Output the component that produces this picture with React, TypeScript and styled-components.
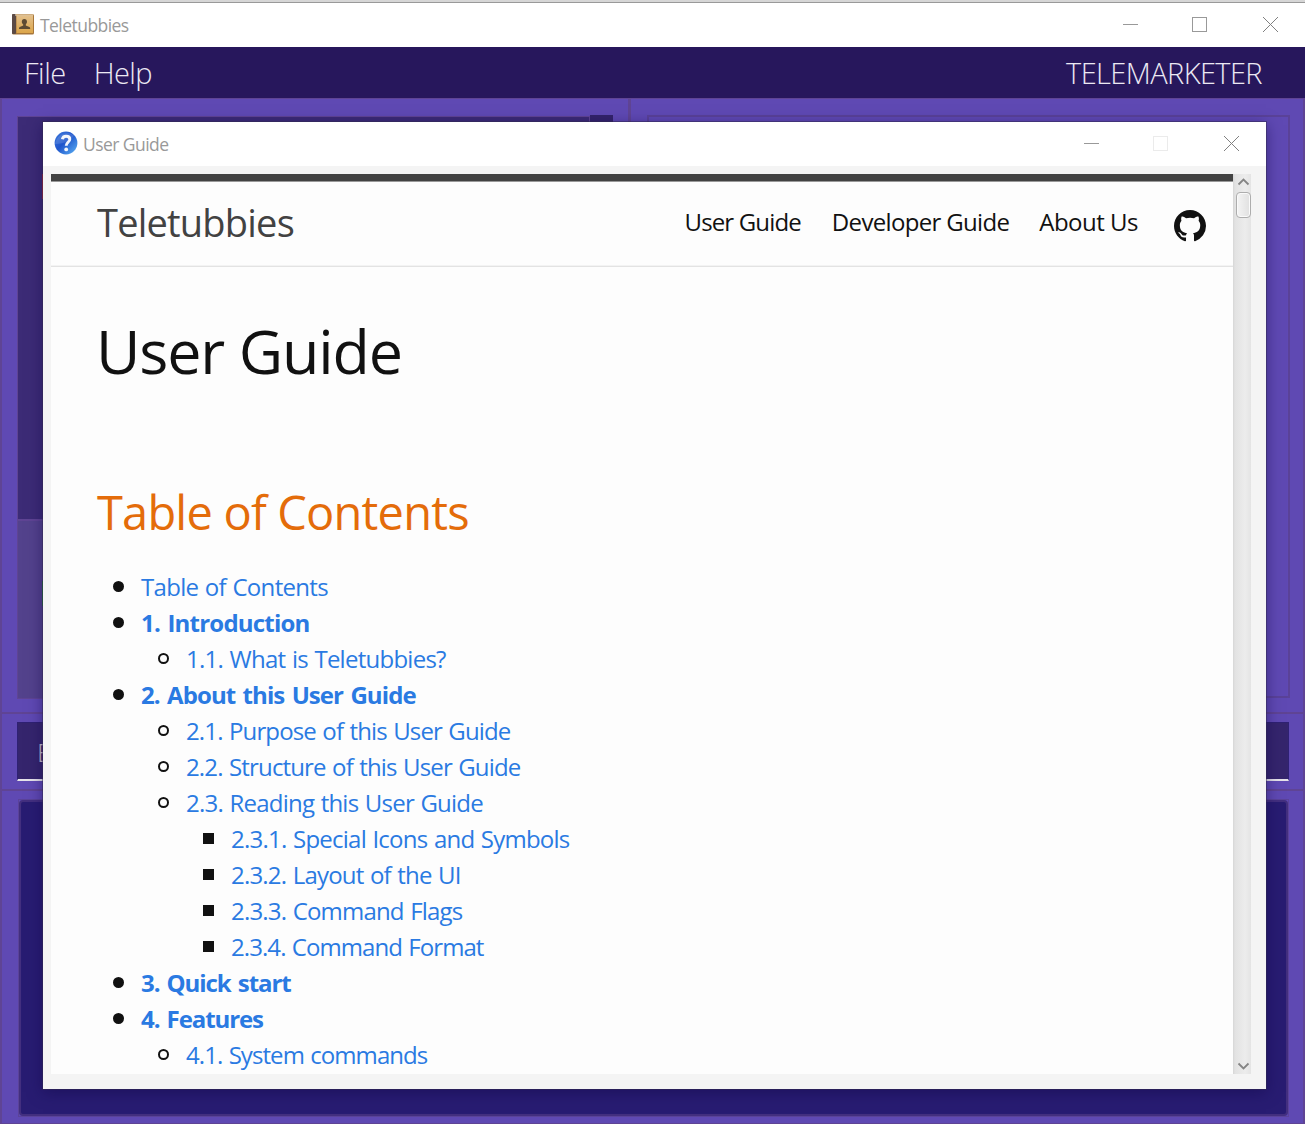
import React from "react";
import styled, { createGlobalStyle, css } from "styled-components";

const Global = createGlobalStyle`
  * { box-sizing: border-box; }
  body { margin: 0; font-family: "Open Sans", "Noto Sans", sans-serif; overflow: hidden; }
`;

const edge = "#5f4494";

const Desktop = styled.div`
  position: relative;
  width: 1305px;
  height: 1124px;
  display: flex;
  flex-direction: column;
  overflow: hidden;
  background: #5f49b3;
`;
const TitleBar = styled.header<{ $main?: boolean }>`
  display: flex;
  align-items: center;
  flex: none;
  background: #fff;
  height: ${(p) => (p.$main ? 47 : 44)}px;
  padding-left: ${(p) => (p.$main ? 12 : 11)}px;
  ${(p) =>
    p.$main
      ? css`
          border-top: 2px solid #d6d6d6;
          box-shadow: inset 0 1px #999;
        `
      : css`
          padding-bottom: 2px;
        `}
`;
const WindowTitle = styled.span<{ $gap: number; $drop?: number }>`
  flex: 1;
  margin-left: ${(p) => p.$gap}px;
  margin-top: ${(p) => p.$drop ?? 0}px;
  font-size: 17.5px;
  line-height: 42px;
  letter-spacing: -0.55px;
  color: #999;
`;
const Controls = styled.div<{ $end: number }>`
  display: flex;
  align-items: center;
  gap: 54px;
  padding-right: ${(p) => p.$end}px;
  svg { display: block; }
  svg:last-child { margin-left: 2px; }
`;
const MenuBar = styled.nav`
  flex: none;
  height: 51px;
  display: flex;
  align-items: center;
  padding: 0 43px 0 24px;
  background: #27175c;
`;
const MenuItem = styled.span<{ $gap?: number; $spacing?: number }>`
  font-size: 29px;
  font-weight: 300;
  line-height: 51px;
  color: #ece9f3;
  margin-right: ${(p) => p.$gap ?? 0}px;
  letter-spacing: ${(p) => p.$spacing ?? 0}px;
`;
const Role = styled(MenuItem)`
  margin-left: auto;
`;

const Split = styled.div`
  flex: none;
  height: 616px;
  display: flex;
  border: 2px solid ${edge};
  border-width: 1px 2px 2px;
`;
const Pane = styled.section<{ $left?: boolean }>`
  display: flex;
  padding: 17px 14px 13px 15px;
  ${(p) =>
    p.$left
      ? css`
          width: 629px;
          border-right: 3px solid ${edge};
        `
      : css`
          flex: 1;
          padding: 16px 13px 14px 16px;
        `}
`;
const PersonList = styled.div`
  width: 573px;
  display: flex;
  flex-direction: column;
`;
const PersonCell = styled.div<{ $h: number; $alt?: boolean }>`
  flex: none;
  height: ${(p) => p.$h}px;
  border: 1px solid ${edge};
  background: ${(p) => (p.$alt ? "#53428c" : "#3c2b76")};
  padding: ${(p) => (p.$alt ? 60 : 57)}px 24px;
`;
const Tag = styled.div<{ $color: string }>`
  width: 70px;
  height: 25px;
  background: ${(p) => p.$color};
`;
const ListThumb = styled.div`
  width: 23px;
  height: 80px;
  margin-top: -1px;
  background: #33236b;
`;
const Detail = styled.div`
  flex: 1;
  border: 2px solid #5a4298;
`;
const CommandSection = styled.section`
  flex: none;
  height: 77px;
  padding: 8px 14px 8px 15px;
  border: 2px solid ${edge};
  border-top: 0;
`;
const CommandField = styled.div`
  height: 59px;
  padding-left: 19px;
  background: #35256d;
  border: 1px solid #2f2173;
  border-bottom: 2px solid #e6e3ea;
  font-size: 26px;
  font-weight: 300;
  line-height: 58px;
  color: #c9c0cc;
`;
const ResultSection = styled.section`
  flex: 1;
  padding: 8px 14px 6px 16px;
  border: 2px solid ${edge};
  border-width: 0 2px 1px;
`;
const ResultBox = styled.div`
  height: 100%;
  border: 1px solid #5b4399;
  display: flex;
`;
const ResultText = styled.div`
  flex: 1;
  border: 2px solid #432f7f;
  border-radius: 4px;
  background: #281c72;
`;

const Dialog = styled.div`
  position: absolute;
  left: 43px;
  top: 122px;
  width: 1223px;
  height: 967px;
  display: flex;
  flex-direction: column;
  background: #f4f4f4;
  box-shadow: 0 0 0 1px rgba(50, 42, 80, 0.5), 0 3px 14px rgba(15, 5, 70, 0.5);
`;
const Viewport = styled.div`
  display: flex;
  margin: 8px 15px 15px 8px;
  height: 900px;
`;
const Page = styled.main`
  flex: 1;
  background: #fdfdfd;
  border-top: 7px solid #424242;
  box-shadow: inset 0 1px #999;
  overflow: hidden;
`;
const SiteHeader = styled.div`
  height: 86px;
  display: flex;
  align-items: center;
  padding: 0 27px 0 46px;
  border-bottom: 1px solid #e3e3e3;
  box-shadow: inset 0 -1px #f3f3f3;
`;
const SiteTitle = styled.span`
  margin: 0 auto 2px 0;
  font-size: 38px;
  line-height: 83px;
  letter-spacing: -0.78px;
  color: #424242;
`;
const NavLink = styled.span<{ $gap: number; $spacing: number }>`
  font-size: 24px;
  line-height: 82px;
  margin-bottom: 3px;
  letter-spacing: ${(p) => p.$spacing}px;
  margin-right: ${(p) => p.$gap}px;
  color: #111;
`;
const Heading = styled.h1`
  margin: 35px 0 0 45px;
  font-size: 61px;
  font-weight: 400;
  line-height: 97px;
  letter-spacing: -1.15px;
  color: #111;
`;
const TocHeading = styled.h2`
  margin: 71px 0 0 46px;
  font-size: 47px;
  font-weight: 400;
  line-height: 84px;
  letter-spacing: -0.8px;
  color: #e46c0a;
`;
const TocList = styled.ul`
  list-style: none;
  margin: 15px 0 0;
  padding: 0 0 0 62px;
`;
const TocItem = styled.li<{ $depth: number; $spacing: number; $strong?: boolean }>`
  display: flex;
  align-items: center;
  height: 36px;
  margin-left: ${(p) => p.$depth * 45}px;
  font-size: 24px;
  line-height: 36px;
  white-space: pre;
  font-weight: ${(p) => (p.$strong ? 700 : 400)};
  letter-spacing: ${(p) => p.$spacing}px;
  word-spacing: ${(p) => (p.$strong ? 2 : 1)}px;
  color: #2a7ae2;
  &::before {
    content: "";
    box-sizing: border-box;
    width: 11px;
    height: 11px;
    margin: 0 17px 1px 0;
    border: 2px solid #111;
    border-radius: ${(p) => (p.$depth === 2 ? 0 : "50%")};
    background: ${(p) => (p.$depth === 1 ? "transparent" : "#111")};
  }
`;
const ScrollBar = styled.div`
  width: 18px;
  display: flex;
  flex-direction: column;
  align-items: flex-end;
  background: linear-gradient(90deg, #d6d6d6 0, #e2e2e2 2px, #ececec 12px, #e4e4e4 18px);
  svg { display: block; flex: none; }
  svg:last-child { margin-top: auto; }
`;
const Thumb = styled.div`
  width: 15px;
  height: 26px;
  border: 1px solid #adadad;
  border-radius: 4px;
  background: linear-gradient(90deg, #f4f4f4, #e0e0e0);
  box-shadow: inset 0 0 0 1px #fafafa;
`;

const WindowButtons = ({ end, faded }: { end: number; faded?: boolean }) => (
  <Controls $end={end}>
    <svg width="15" height="15"><path d="M0 7.5h15" stroke="#999" /></svg>
    <svg width="15" height="15"><rect x=".5" y=".5" width="14" height="14" fill="none" stroke={faded ? "#ebebeb" : "#999"} /></svg>
    <svg width="15" height="15"><path d="M0 0l15 15M15 0l-15 15" stroke="#808080" fill="none" /></svg>
  </Controls>
);

const AddressBook = () => (
  <svg width="22" height="21" viewBox="0 0 22 21">
    <defs>
      <linearGradient id="cover" x1="0" y1="0" x2="0" y2="1">
        <stop offset="0" stopColor="#e3c08c" /><stop offset="1" stopColor="#dca64a" />
      </linearGradient>
    </defs>
    <rect width="22" height="20.5" rx="1.5" fill="#a8773a" />
    <rect width="4" height="20" rx="1" fill="#5b4a45" />
    <rect x="4.5" y="1.5" width="16.5" height="17.5" fill="url(#cover)" />
    <path d="M3 1h18" stroke="#f6e4c4" />
    <path d="M12.3 5c1.8 0 2.7 1.2 2.7 2.8 0 1.3-.6 2-1.2 2.6v1.2l3.6 1.4c.6.3.8.8.8 2H7c0-1.2.2-1.7.8-2l3.4-1.4v-1.2C10.3 9.8 9.8 9 9.8 7.8 9.8 6.2 10.6 5 12.3 5z" fill="#5d4a33" />
  </svg>
);

const HelpBadge = () => (
  <svg width="24" height="24" viewBox="0 0 24 24">
    <defs>
      <linearGradient id="ball" x1="0" y1="0" x2="1" y2="1">
        <stop offset="0" stopColor="#3f7bdc" /><stop offset=".45" stopColor="#1f55cc" /><stop offset="1" stopColor="#5db4f5" />
      </linearGradient>
    </defs>
    <circle cx="12" cy="12" r="11.4" fill="url(#ball)" />
    <path d="M1 13C3 3 12 0 20 4c-2 5-9 9-19 9z" fill="#fff" opacity=".13" />
    <path d="M8.4 8.2C8.7 5.9 10 5.2 12.1 5.2c2.3 0 3.7 1.1 3.7 3 0 3.1-3.6 3.1-3.6 6.5" fill="none" stroke="#f4f6fb" strokeWidth="2.9" />
    <circle cx="12.2" cy="18.4" r="1.9" fill="#f4f6fb" />
  </svg>
);

const MarkHolder = styled.div`
  margin-top: 5px;
  svg { display: block; }
`;

const GitHubMark = () => (
  <svg width="32" height="32" viewBox="0 0 16 16">
    <path fill="#111" d="M8 0C3.58 0 0 3.58 0 8c0 3.54 2.29 6.53 5.47 7.59.4.07.55-.17.55-.38 0-.19-.01-.82-.01-1.49-2.01.37-2.53-.49-2.69-.94-.09-.23-.48-.94-.82-1.13-.28-.15-.68-.52-.01-.53.63-.01 1.08.58 1.23.82.72 1.21 1.87.87 2.33.66.07-.52.28-.87.51-1.07-1.78-.2-3.64-.89-3.64-3.95 0-.87.31-1.59.82-2.15-.08-.2-.36-1.02.08-2.12 0 0 .67-.21 2.2.82.64-.18 1.32-.27 2-.27s1.36.09 2 .27c1.53-1.04 2.2-.82 2.2-.82.44 1.1.16 1.92.08 2.12.51.56.82 1.27.82 2.15 0 3.07-1.87 3.75-3.65 3.95.29.25.54.73.54 1.48 0 1.07-.01 1.93-.01 2.2 0 .21.15.46.55.38A8.01 8.01 0 0 0 16 8c0-4.42-3.58-8-8-8z" />
  </svg>
);

const toc: [number, string, number, boolean?][] = [
  [0, "Table of Contents", -0.7],
  [0, "1. Introduction", -0.79, true],
  [1, "1.1. What is Teletubbies?", -0.74],
  [0, "2. About this User Guide", -0.92, true],
  [1, "2.1. Purpose of this User Guide", -0.86],
  [1, "2.2. Structure of this User Guide", -0.85],
  [1, "2.3. Reading this User Guide", -0.77],
  [2, "2.3.1. Special Icons and Symbols", -0.76],
  [2, "2.3.2. Layout of the UI", -0.8],
  [2, "2.3.3. Command Flags", -0.81],
  [2, "2.3.4. Command Format", -0.93],
  [0, "3. Quick start", -1.07, true],
  [0, "4. Features", -1.08, true],
  [1, "4.1. System commands", -0.93],
];

export default function App() {
  return (
    <Desktop>
      <Global />
      <TitleBar $main>
        <AddressBook />
        <WindowTitle $gap={6}>Teletubbies</WindowTitle>
        <WindowButtons end={27} />
      </TitleBar>
      <MenuBar>
        <MenuItem $gap={28} $spacing={-0.5}>File</MenuItem>
        <MenuItem $spacing={-0.6}>Help</MenuItem>
        <Role $spacing={-0.6}>TELEMARKETER</Role>
      </MenuBar>
      <Split>
        <Pane $left>
          <PersonList>
            <PersonCell $h={404}><Tag $color="#d8262c" /></PersonCell>
            <PersonCell $h={179} $alt><Tag $color="#1f8a2e" /></PersonCell>
          </PersonList>
          <ListThumb />
        </Pane>
        <Pane><Detail /></Pane>
      </Split>
      <CommandSection>
        <CommandField>E</CommandField>
      </CommandSection>
      <ResultSection>
        <ResultBox><ResultText /></ResultBox>
      </ResultSection>

      <Dialog>
        <TitleBar>
          <HelpBadge />
          <WindowTitle $gap={5} $drop={2}>User Guide</WindowTitle>
          <WindowButtons end={27} faded />
        </TitleBar>
        <Viewport>
          <Page>
            <SiteHeader>
              <SiteTitle>Teletubbies</SiteTitle>
              <NavLink $gap={31} $spacing={-0.85}>User Guide</NavLink>
              <NavLink $gap={30} $spacing={-0.67}>Developer Guide</NavLink>
              <NavLink $gap={36} $spacing={-0.5}>About Us</NavLink>
              <MarkHolder><GitHubMark /></MarkHolder>
            </SiteHeader>
            <Heading>User Guide</Heading>
            <TocHeading>Table of Contents</TocHeading>
            <TocList>
              {toc.map(([depth, label, spacing, strong]) => (
                <TocItem key={label} $depth={depth} $spacing={spacing} $strong={strong}>{label}</TocItem>
              ))}
            </TocList>
          </Page>
          <ScrollBar>
            <svg width="15" height="18"><path d="M2.5 10.5l5-5 5 5" fill="none" stroke="#858585" strokeWidth="1.8" /></svg>
            <Thumb />
            <svg width="15" height="18"><path d="M2.5 7.5l5 5 5-5" fill="none" stroke="#858585" strokeWidth="1.8" /></svg>
          </ScrollBar>
        </Viewport>
      </Dialog>
    </Desktop>
  );
}
